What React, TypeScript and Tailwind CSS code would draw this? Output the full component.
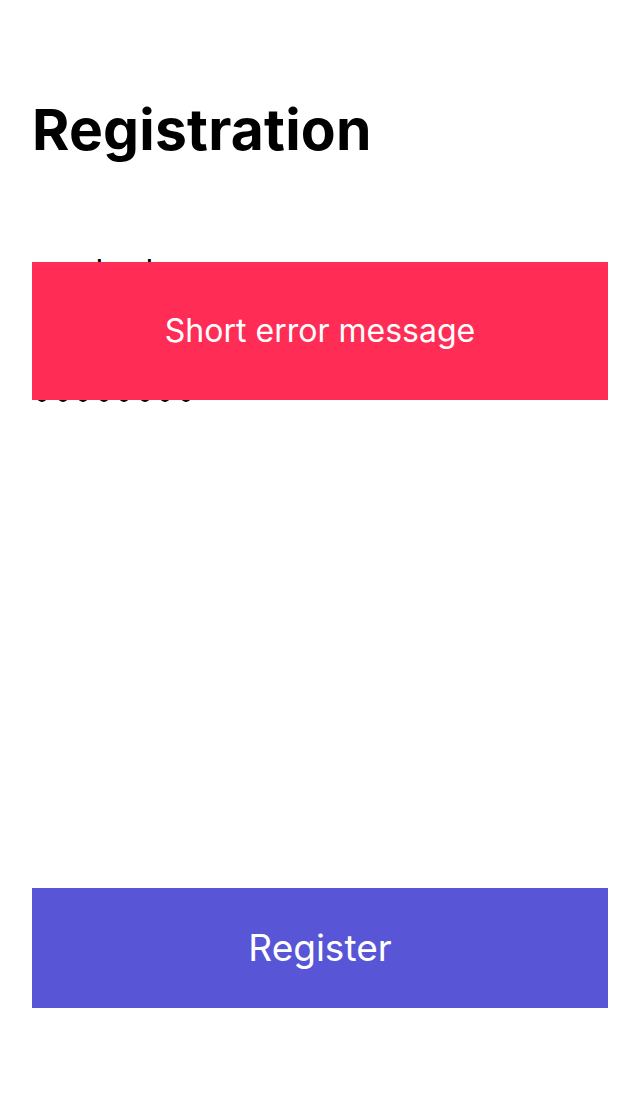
import React from "react";

export default function App() {
  const font = { fontFamily: "Inter, 'Noto Sans', sans-serif" };
  return (
    <div className="relative w-[640px] h-[1096px] bg-white overflow-hidden" style={font}>
      <div className="flex flex-col px-8 h-full">
        <h1 className="pt-[102px] text-[57px] leading-[56px] font-bold text-black tracking-[0.2px]">
          Registration
        </h1>
        <div className="mt-[94px] h-[40px] text-[32px] leading-[40px] text-black">maxherb</div>
        <div className="mt-[100px] flex items-center gap-[10.5px] pl-[5px] h-[10px]">
          {Array.from({ length: 8 }).map((_, i) => (
            <span key={i} className="block w-[10px] h-[10px] rounded-full bg-black" />
          ))}
        </div>
        <div className="flex-1" />
        <button className="mb-[88px] h-[120px] w-full bg-[#5856D6] text-white text-[37px] font-normal">
          Register
        </button>
      </div>
      <div className="absolute left-8 right-8 top-[262px] h-[138px] bg-[#FF2D55] flex items-center justify-center">
        <span className="text-white text-[32px] leading-none">Short error message</span>
      </div>
    </div>
  );
}
